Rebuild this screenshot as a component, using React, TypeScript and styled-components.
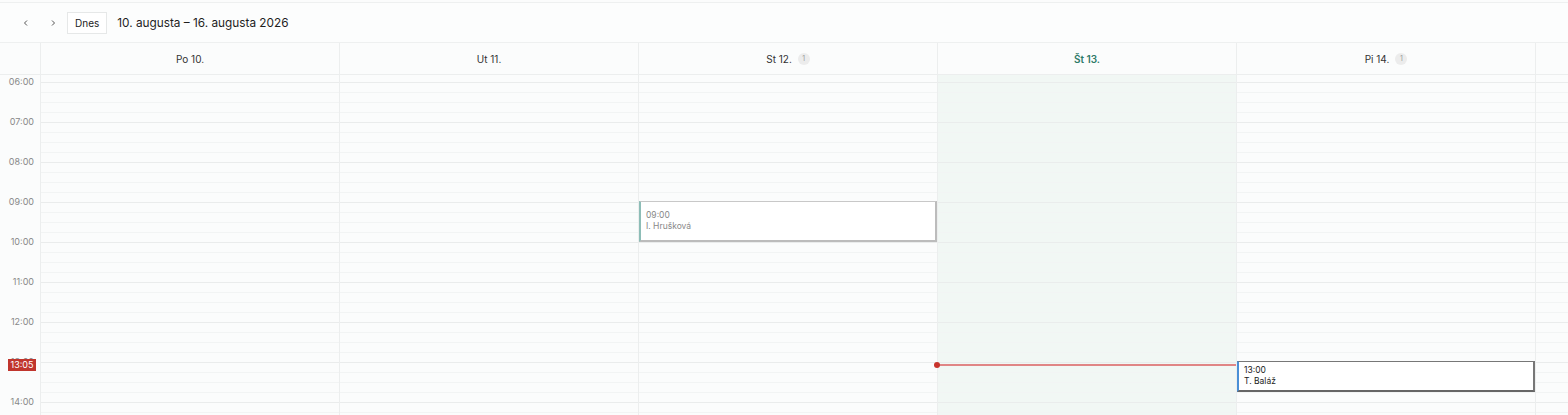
import React from 'react';
import styled, { createGlobalStyle, css } from 'styled-components';

const GlobalStyle = createGlobalStyle`
  html, body {
    margin: 0;
    padding: 0;
    background: #fbfcfc;
    font-family: Inter, "Liberation Sans", Arial, sans-serif;
    color: #222;
  }
`;

const HOUR = 40;
const OFFSET = 7; // first visible line (06:00) sits 7px below the top of the body
const GUTTER = 40;
const COL = 299;

const Page = styled.div`
  width: 1568px;
  height: 415px;
  overflow: hidden;
  padding-top: 2px;
  box-sizing: border-box;
`;

const Toolbar = styled.div`
  display: flex;
  align-items: center;
  height: 39px;
  padding-left: 17px;
  border-top: 1px solid #eef0f0;
  border-bottom: 1px solid #eef0f0;
  background: #fcfdfd;
`;

const NavButton = styled.button<{ $gap: number }>`
  width: 18px;
  height: 20px;
  margin-right: ${(p) => p.$gap}px;
  border: none;
  background: transparent;
  display: flex;
  align-items: center;
  justify-content: center;
  padding: 0;
  cursor: pointer;
`;

const TodayButton = styled.button`
  height: 22px;
  padding: 0 7px;
  border: 1px solid #e6e8e8;
  background: #fff;
  font-family: inherit;
  font-size: 10px;
  color: #222;
  cursor: pointer;
`;

const RangeTitle = styled.h1`
  margin: 0 0 0 10px;
  font-size: 11.8px;
  font-weight: 400;
  color: #1e1e1e;
`;

const Grid = styled.div`
  display: grid;
  grid-template-columns: ${GUTTER}px repeat(7, ${COL}px);
`;

const Corner = styled.div`
  height: 31px;
  border-bottom: 1px solid #eceeee;
`;

const DayHead = styled.div<{ $today?: boolean }>`
  height: 31px;
  border-left: 1px solid #eceeee;
  border-bottom: 1px solid #eceeee;
  display: flex;
  align-items: center;
  justify-content: center;
  gap: 6px;
  font-size: 10px;
  color: ${(p) => (p.$today ? '#2e7a68' : '#333')};
  font-weight: ${(p) => (p.$today ? 600 : 400)};
`;

const Badge = styled.span`
  display: inline-flex;
  align-items: center;
  justify-content: center;
  width: 12px;
  height: 12px;
  border-radius: 50%;
  background: #ececec;
  color: #999;
  font-size: 7px;
  font-weight: 400;
`;

const Gutter = styled.div`
  position: relative;
  height: 340px;
  padding-top: ${OFFSET}px;
  box-sizing: border-box;
`;

const HourLabel = styled.div`
  height: ${HOUR}px;
  text-align: right;
  padding-right: 6px;
  font-size: 9px;
  line-height: 12px;
  color: #888;
  & > span {
    display: block;
    position: relative;
    top: -6px;
  }
`;

const NowLabel = styled.div<{ $top: number }>`
  position: absolute;
  left: 8px;
  top: ${(p) => p.$top - 6}px;
  width: 28px;
  height: 12px;
  background: #c0352d;
  color: #fff;
  font-size: 9px;
  line-height: 12px;
  text-align: center;
`;

const DayColumn = styled.div<{ $today?: boolean }>`
  position: relative;
  height: 340px;
  border-left: 1px solid #eceeee;
  background-color: ${(p) => (p.$today ? '#f1f7f4' : '#fbfcfc')};
  background-image: linear-gradient(to bottom, #eaecec 1px, transparent 1px),
    linear-gradient(to bottom, #f2f4f4 1px, transparent 1px);
  background-size: 100% ${HOUR}px, 100% 10px;
  background-position: 0 ${OFFSET}px, 0 ${OFFSET}px;
`;

const Event = styled.div<{ $top: number; $height: number; $accent: string; $past?: boolean }>`
  position: absolute;
  left: 0;
  right: 0;
  top: ${(p) => p.$top}px;
  height: ${(p) => p.$height}px;
  box-sizing: border-box;
  display: flex;
  flex-direction: column;
  justify-content: center;
  background: #fff;
  border-left: 2px solid ${(p) => p.$accent};
  padding: 0 5px;
  font-size: 8.5px;
  line-height: 11px;
  ${(p) =>
    p.$past
      ? css`
          color: #888;
          border-top: 1px solid #c8c8c8;
          border-right: 2px solid #bcbcbc;
          border-bottom: 2px solid #bcbcbc;
        `
      : css`
          color: #222;
          border-top: 1px solid #777;
          border-right: 2px solid #777;
          border-bottom: 2px solid #666;
        `}
`;

const NowLine = styled.div<{ $top: number }>`
  position: absolute;
  left: 0;
  right: 0;
  top: ${(p) => p.$top - 1}px;
  height: 2px;
  background: #e08585;
  &::before {
    content: '';
    position: absolute;
    left: -4px;
    top: -2px;
    width: 6px;
    height: 6px;
    border-radius: 50%;
    background: #c8342c;
  }
`;

const Chevron = ({ dir }: { dir: 'left' | 'right' }) => (
  <svg width="8" height="8" viewBox="0 0 8 8" fill="none" stroke="#555" strokeWidth="1">
    {dir === 'left' ? <path d="M5 1.5 2.5 4 5 6.5" /> : <path d="M3 1.5 5.5 4 3 6.5" />}
  </svg>
);

const days = [
  { label: 'Po 10.' },
  { label: 'Ut 11.' },
  { label: 'St 12.', count: 1 },
  { label: 'Št 13.', today: true },
  { label: 'Pi 14.', count: 1 },
  { label: 'So 15.' },
  { label: 'Ne 16.' },
];

const hours = [6, 7, 8, 9, 10, 11, 12, 13, 14];

const y = (h: number, m = 0) => OFFSET + (h - 6) * HOUR + (m / 60) * HOUR;

export default function App() {
  return (
    <>
      <GlobalStyle />
      <Page>
        <Toolbar>
          <NavButton $gap={9} aria-label="Predchádzajúci">
            <Chevron dir="left" />
          </NavButton>
          <NavButton $gap={5} aria-label="Ďalší">
            <Chevron dir="right" />
          </NavButton>
          <TodayButton>Dnes</TodayButton>
          <RangeTitle>10. augusta – 16. augusta 2026</RangeTitle>
        </Toolbar>
        <Grid>
          <Corner />
          {days.map((d) => (
            <DayHead key={d.label} $today={d.today}>
              {d.label}
              {d.count ? <Badge>{d.count}</Badge> : null}
            </DayHead>
          ))}
          <Gutter>
            {hours.map((h) => (
              <HourLabel key={h}>
                <span>{String(h).padStart(2, '0')}:00</span>
              </HourLabel>
            ))}
            <NowLabel $top={y(13, 5)}>13:05</NowLabel>
          </Gutter>
          {days.map((d, i) => (
            <DayColumn key={d.label} $today={d.today}>
              {i === 2 && (
                <Event $top={y(9) - 1} $height={41} $accent="#8dbdb7" $past>
                  <div>09:00</div>
                  <div>I. Hrušková</div>
                </Event>
              )}
              {d.today && <NowLine $top={y(13, 5)} />}
              {i === 4 && (
                <Event $top={y(13) - 1} $height={31} $accent="#4a8fd6">
                  <div>13:00</div>
                  <div>T. Baláž</div>
                </Event>
              )}
            </DayColumn>
          ))}
        </Grid>
      </Page>
    </>
  );
}
